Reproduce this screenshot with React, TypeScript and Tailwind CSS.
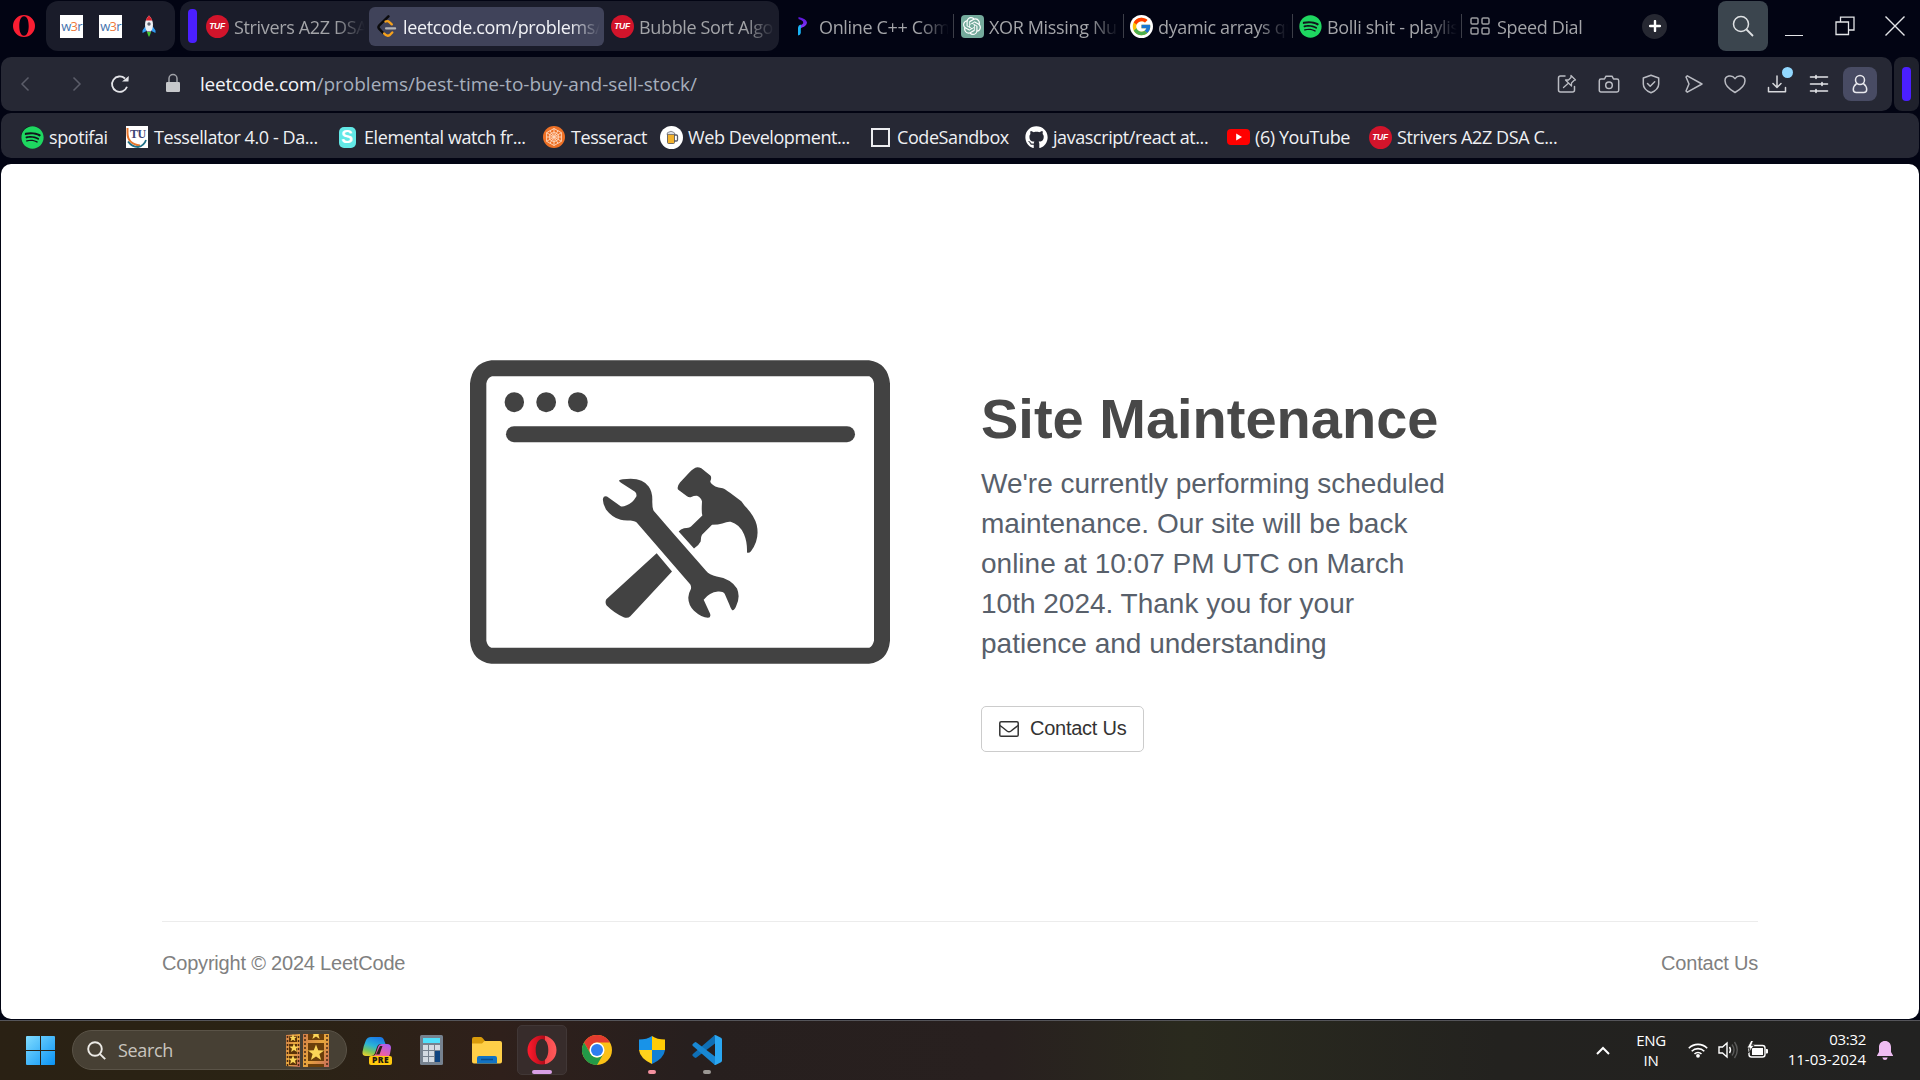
import React from "react";
import { FaSpotify, FaGithub } from "react-icons/fa";
import { FcGoogle } from "react-icons/fc";
import { SiOpenai } from "react-icons/si";

const UI = "font-['Open_Sans','Noto_Sans',sans-serif]";

function TufIcon() {
  return (
    <div className="flex h-[23px] w-[23px] items-center justify-center rounded-full bg-[#d2142b]">
      <span className="font-['Liberation_Sans',sans-serif] text-[8.5px] leading-none font-bold tracking-[-0.3px] text-white italic">TUF</span>
    </div>
  );
}

function SpotifyIcon() {
  return (
    <div className="flex h-[22px] w-[22px] items-center justify-center rounded-full bg-[#11151c]">
      <FaSpotify className="h-[23px] w-[23px] shrink-0 text-[#1ed760]" />
    </div>
  );
}

function W3rIcon() {
  return (
    <div className="flex h-[23px] w-[23px] items-center justify-center bg-white font-['Open_Sans',sans-serif] text-[13px] leading-none tracking-[-0.7px] text-[#4573ae]">
      w<span className="text-[#ee7b3d]">3</span>r
    </div>
  );
}

function RocketIcon() {
  return (
    <svg viewBox="0 0 16 22" className="h-[22px] w-[16px]">
      <path d="M4.500 11 1.500 15.500v2.500l4-2zM11.500 11l3 4.500v2.500l-4-2z" fill="#2f9df4" />
      <path d="M8 .500c2.500 2.500 4 5.500 4 9 0 3-.8 5-2 7H6c-1.200-2-2-4-2-7 0-3.500 1.500-6.500 4-9z" fill="#eef1f4" />
      <path d="M8 .500c1.600 1.600 2.700 3.200 3.300 5H4.700C5.300 3.700 6.400 2.100 8 .500z" fill="#d8232f" />
      <circle cx="8" cy="9" r="1.700" fill="#5b6472" />
      <path d="M6 17h4l-1 3-1 2-1-2z" fill="#43c934" />
    </svg>
  );
}

function LeetIcon() {
  return (
    <svg viewBox="0 0 24 24" className="h-[23px] w-[23px]" fill="none" strokeLinecap="round" strokeLinejoin="round">
      <path d="M14 1.500 4.200 11.200q-1.200 1.500 0 3l4.300 4.600" stroke="#0b0b0d" strokeWidth="2.600" />
      <path d="m11 6.800q2.300-1.200 4 .6l2.500 2.400M9.500 19.300q3 3.700 6 1.600l2.500-2.700" stroke="#f5a11c" strokeWidth="2.400" />
      <path d="M11.500 14H21" stroke="#b3b3b5" strokeWidth="2.200" />
    </svg>
  );
}

function ProgramizIcon() {
  return (
    <svg viewBox="0 0 12 20" className="h-[20px] w-[12px]">
      <defs>
        <linearGradient id="pz" x1="0" y1="0" x2="0" y2="1">
          <stop offset="0" stopColor="#5a12d8" />
          <stop offset="1" stopColor="#8a3dff" />
        </linearGradient>
      </defs>
      <path d="M2.500 1Q10.500 2.500 11 6.500q-.5 3.500-5 5L3.500 13V9.500L6 8.500Q8 7.500 7 5.500 5.500 3.500 2.500 3z" fill="url(#pz)" />
      <path d="M2 11.500q0-2 2.800-3v8.500q-.3 2-2.800 2.500z" fill="#19b4f5" />
    </svg>
  );
}

function ChatIcon() {
  return (
    <div className="flex h-[23px] w-[23px] items-center justify-center rounded-[4px] bg-[#74aa9c]">
      <SiOpenai className="h-[18px] w-[18px] text-white" />
    </div>
  );
}

function GoogleIcon() {
  return (
    <div className="flex h-[23px] w-[23px] items-center justify-center rounded-full bg-white">
      <FcGoogle className="h-[21px] w-[21px]" />
    </div>
  );
}

function GridIcon() {
  return (
    <svg viewBox="0 0 20 18" className="h-[18px] w-[20px]" fill="none" stroke="#9a9b9f" strokeWidth="1.500">
      <rect x="1" y="1" width="7" height="6" rx="1.200" />
      <rect x="12" y="1" width="7" height="6" rx="1.200" />
      <rect x="1" y="11" width="7" height="6" rx="1.200" />
      <rect x="12" y="11" width="7" height="6" rx="1.200" />
    </svg>
  );
}

function Tab({ box, icon, text, active }: { box: string; icon: React.ReactNode; text: string; active?: boolean }) {
  return (
    <div className={`flex shrink-0 items-center gap-[5px] pr-[4px] ${box}`}>
      <div className="flex w-6 shrink-0 items-center justify-center">{icon}</div>
      <div
        className={`min-w-0 flex-1 overflow-hidden pt-[2px] text-[18px] leading-[26px] tracking-[-0.35px] whitespace-nowrap [mask-image:linear-gradient(to_right,black_calc(100%-30px),transparent)] ${active ? "text-[#f1f2f6]" : "text-[#a3a4a8]"}`}
      >
        {text}
      </div>
    </div>
  );
}

function Sep() {
  return <div className="-mr-px h-6 w-px shrink-0 bg-[#3c3e48]" />;
}

function OperaMark() {
  return (
    <svg viewBox="0 0 22 22" className="h-[22px] w-[22px]">
      <path fillRule="evenodd" fill="#fa1e32" d="M11 0a11 11 0 1 0 0 22 11 11 0 0 0 0-22zM11 1.300c3.200 0 4.700 4.300 4.700 9.700s-1.500 9.700-4.700 9.700S6.300 16.400 6.300 11 7.800 1.300 11 1.300z" />
    </svg>
  );
}

function TabBar() {
  return (
    <div className="flex h-[57px] shrink-0 items-start pt-px">
      <div className="flex h-[50px] w-[46px] shrink-0 items-center justify-center pl-[2px]">
        <OperaMark />
      </div>
      <div className="flex h-[50px] w-[129px] shrink-0 items-center rounded-[12px] bg-[#1a1c2a] pl-[14px]">
        <W3rIcon />
        <div className="w-4" />
        <W3rIcon />
        <div className="w-[19px]" />
        <RocketIcon />
      </div>
      <div className="ml-[5px] flex h-[50px] w-[599px] shrink-0 items-center rounded-[12px] bg-[#1a1c2a]">
        <div className="ml-2 h-[34px] w-[9px] shrink-0 rounded-[4px] bg-[#4b1fff]" />
        <Tab box="w-[172px] pl-[8px]" icon={<TufIcon />} text="Strivers A2Z DSA" />
        <Tab box="h-[39px] w-[235px] rounded-[6px] bg-[#40435a] pl-[5px]" icon={<LeetIcon />} text="leetcode.com/problems/" active />
        <Tab box="w-[175px] pl-[6px]" icon={<TufIcon />} text="Bubble Sort Algo" />
      </div>
      <div className="flex h-[50px] shrink-0 items-center">
        <Tab box="w-[174px] pl-[11px]" icon={<ProgramizIcon />} text="Online C++ Com" />
        <Sep />
        <Tab box="w-[170px] pl-[7px]" icon={<ChatIcon />} text="XOR Missing Nu" />
        <Sep />
        <Tab box="w-[169px] pl-[6px]" icon={<GoogleIcon />} text="dyamic arrays qu" />
        <Sep />
        <Tab box="w-[169px] pl-[6px]" icon={<SpotifyIcon />} text="Bolli shit - playlis" />
        <Sep />
        <Tab box="w-[181px] pl-[7px]" icon={<GridIcon />} text="Speed Dial" />
        <div className="flex h-[25px] w-[25px] items-center justify-center rounded-full bg-[#262832]">
          <svg viewBox="0 0 12 12" className="h-3 w-3" stroke="#fff" strokeWidth="2.400" strokeLinecap="round">
            <path d="M6 1v10M1 6h10" />
          </svg>
        </div>
        <div className="ml-[51px] flex h-[50px] w-[50px] items-center justify-center rounded-[8px] bg-[#3b454e]">
          <svg viewBox="0 0 22 22" className="h-[22px] w-[22px]" fill="none" stroke="#dfe2e4" strokeWidth="1.500">
            <circle cx="9" cy="9" r="7.500" />
            <path d="m14.500 14.500 6.500 6.500" strokeWidth="1.800" />
          </svg>
        </div>
        <div className="mt-[18px] ml-[17px] h-px w-[18px] bg-[#e4e5e8]" />
        <svg viewBox="0 0 20 20" className="ml-[32px] h-5 w-5" fill="none" stroke="#e4e5e8" strokeWidth="1.300">
          <path d="M1 6h12.500v12.500H1zM5.500 6V1.200H19V14h-5.500" />
        </svg>
        <svg viewBox="0 0 20 20" className="ml-[30px] h-5 w-5" stroke="#e4e5e8" strokeWidth="1.400">
          <path d="m.5 .5 19 19M19.500.5l-19 19" />
        </svg>
      </div>
    </div>
  );
}

function ToolIcon({ box, children }: { box: string; children: React.ReactNode }) {
  return (
    <svg viewBox="0 0 22 20" className={`h-5 w-[22px] shrink-0 ${box}`} fill="none" stroke="#babcc3" strokeWidth="1.500" strokeLinecap="round" strokeLinejoin="round">
      {children}
    </svg>
  );
}

function AddressBar() {
  return (
    <div className="flex h-[54px] shrink-0 gap-[2px] pl-px">
      <div className="flex h-[54px] w-[1891px] items-center rounded-[10px] bg-[#262834]">
        <svg viewBox="0 0 10 16" className="ml-[19px] h-4 w-[10px]" fill="none" stroke="#5b5d69" strokeWidth="1.500">
          <path d="M8.500 1.500 2 8l6.500 6.500" />
        </svg>
        <svg viewBox="0 0 10 16" className="ml-[42px] h-4 w-[10px]" fill="none" stroke="#5b5d69" strokeWidth="1.500">
          <path d="M1.500 1.500 8 8l-6.500 6.500" />
        </svg>
        <svg viewBox="0 0 20 20" className="ml-[28px] h-5 w-5" fill="none" stroke="#e3e4e8" strokeWidth="1.800">
          <path d="M17 12.800A7.700 7.700 0 1 1 15 4.500" />
          <path d="M12 7.600 18.500 7.600 18.800 2z" fill="#e3e4e8" stroke="none" />
        </svg>
        <svg viewBox="0 0 16 20" className="ml-[35px] mb-[3px] h-[20px] w-[16px]">
          <path d="M4 9V5.500a4 4 0 0 1 8 0V9" fill="none" stroke="#a0a2a8" strokeWidth="1.500" />
          <rect x="1" y="9" width="14" height="10" rx="1.200" fill="#c6c8cb" />
        </svg>
        <div className="ml-[19px] flex-1 text-[19px] leading-[26px] text-[#a6afbd]">
          <span className="tracking-[-0.2px] text-[#f3f4f7]">leetcode.com</span>/problems/best-time-to-buy-and-sell-stock/
        </div>
        <ToolIcon box="mr-[20px]">
          <path d="M9 2H4.500Q2.500 2 2.500 4v12q0 2 2 2h12q2 0 2-2v-3.500" />
          <path d="m15 1.500 4.500 4.500-1.500.5-2.500 2.500v3L9.500 6h3L15 3.500zM12 9.500 7.500 13.500" strokeWidth="1.300" />
        </ToolIcon>
        <ToolIcon box="mr-[20px]">
          <path d="M3 5h3.500L8 2.200h6L15.500 5H19q1.700 0 1.700 1.700v9.600Q20.700 18 19 18H3q-1.700 0-1.700-1.700V6.700Q1.300 5 3 5z" />
          <circle cx="11" cy="11.200" r="3.300" />
        </ToolIcon>
        <ToolIcon box="mr-[21px]">
          <path d="M11 1.200 18.700 4v6q0 5.500-7.700 8.800Q3.300 15.500 3.300 10V4z" />
          <path d="m7.500 9.500 2.700 2.700 4.500-4.500" />
        </ToolIcon>
        <ToolIcon box="mr-[19px]">
          <path d="M4.300 1.800 19 10 4.300 18.200 3 17l3-7-3-7z" />
        </ToolIcon>
        <ToolIcon box="mr-[20px]">
          <path d="M11 18.500C5 15 1 11 1 6.700 1 1.500 8 .3 11 4.700 14 .3 21 1.500 21 6.700 21 11 17 15 11 18.500z" />
        </ToolIcon>
        <div className="relative mr-[20px] shrink-0">
          <ToolIcon box="block">
            <path d="M11 2v11M7 9.500l4 4 4-4M2.500 13.500v4.300h17v-4.300" stroke="#d7d8dc" />
          </ToolIcon>
          <div className="absolute top-[-7px] left-[16px] h-[11px] w-[11px] rounded-full bg-[#92d8ff]" />
        </div>
        <ToolIcon box="mr-[13px]">
          <path d="M2.500 3h17M2.500 10h17M2.500 17h17M8 1.500v3M14 8.500v3M8 15.500v3" stroke="#e3e4e8" strokeWidth="1.600" />
        </ToolIcon>
        <div className="mr-[15px] flex h-[34px] w-[34px] shrink-0 items-center justify-center rounded-[8px] bg-[#484b63]">
          <svg viewBox="0 0 16 20" className="h-5 w-4" fill="none" stroke="#e9e9ee" strokeWidth="1.500">
            <circle cx="8" cy="6" r="4.500" />
            <path d="M4.800 9.300Q1.200 12 1.300 15.500q0 3 3 3h7.400q3 0 3-3 .1-3.500-3.500-6.200" />
          </svg>
        </div>
      </div>
      <div className="flex h-[54px] w-[25px] items-center justify-center rounded-[8px] bg-[#1f212c]">
        <div className="h-[34px] w-[9px] rounded-[4px] bg-[#4b1fff]" />
      </div>
    </div>
  );
}

function Bookmark({ box, icon, text }: { box: string; icon: React.ReactNode; text: string }) {
  return (
    <div className={`flex shrink-0 items-center gap-[5px] ${box}`}>
      <div className="flex w-6 shrink-0 items-center justify-center">{icon}</div>
      <div className="text-[18px] leading-6 tracking-[-0.42px] whitespace-nowrap text-[#eff0f3]">{text}</div>
    </div>
  );
}

function TessellatorIcon() {
  return (
    <div className="relative h-[22px] w-[22px] overflow-hidden bg-white">
      <svg viewBox="0 0 22 22" className="h-[22px] w-[22px]" fill="none" strokeWidth="2">
        <path d="M1.500 2v5q0 11 12.500 12.500" stroke="#e8762c" />
        <path d="M2 15.500q4 5.500 10 5.500 6-1 8-7" stroke="#1f6f86" strokeWidth="1.800" />
      </svg>
      <span className="absolute top-[2px] left-[4px] font-['Liberation_Serif',serif] text-[12px] leading-none font-bold tracking-[-0.5px] text-[#3d4475]">TU</span>
    </div>
  );
}

function ElementalIcon() {
  return (
    <div className="flex h-[21px] w-[17px] items-center justify-center rounded-[5px] bg-[#62e8e6]">
      <span className="font-['Liberation_Sans',sans-serif] text-[18px] leading-none font-bold text-white">S</span>
    </div>
  );
}

function TesseractIcon() {
  return (
    <svg viewBox="0 0 22 22" className="h-[22px] w-[22px]" fill="none" stroke="#ffd9bf" strokeWidth=".9">
      <circle cx="11" cy="11" r="11" fill="#ee7126" stroke="none" />
      <path d="m11 2.500 7.400 4.200v8.600L11 19.500l-7.400-4.200V6.700zM11 6l4.300 2.500v5L11 16l-4.300-2.500v-5zM3.600 6.700l14.800 8.600M18.400 6.700 3.600 15.300M11 2.500v17M7 4.700l8 12.600M15 4.700 7 17.300M3.600 11h14.800" />
    </svg>
  );
}

function BeerIcon() {
  return (
    <svg viewBox="0 0 23 23" className="h-[23px] w-[23px]">
      <circle cx="11.500" cy="11.500" r="11.500" fill="#fff" />
      <path d="M14 9h2.500q1 0 1 1v4q0 1-1 1H14" fill="none" stroke="#5b5d68" strokeWidth="1.300" />
      <rect x="7.500" y="7.500" width="7" height="10" rx="1" fill="#f3b22c" stroke="#4b4d57" strokeWidth=".8" />
      <path d="M7 8.500q0-2.500 2-2.500 2-1.500 4 0 2 .5 2 2.500z" fill="#d9dce3" stroke="#4b4d57" strokeWidth=".6" />
    </svg>
  );
}

function BookmarksBar() {
  return (
    <div className="mx-px mt-[2px] flex h-[45px] shrink-0 items-center rounded-[10px] bg-[#262834] pt-[3px] pl-[19px]">
      <Bookmark box="w-[105px]" icon={<SpotifyIcon />} text="spotifai" />
      <Bookmark box="w-[210px]" icon={<TessellatorIcon />} text="Tessellator 4.0 - Da..." />
      <Bookmark box="w-[207px]" icon={<ElementalIcon />} text="Elemental watch fr..." />
      <Bookmark box="w-[117px]" icon={<TesseractIcon />} text="Tesseract" />
      <Bookmark box="w-[209px]" icon={<BeerIcon />} text="Web Development..." />
      <Bookmark box="w-[156px]" icon={<div className="h-[19px] w-[19px] border-2 border-[#ecedf0]" />} text="CodeSandbox" />
      <Bookmark box="w-[202px]" icon={<FaGithub className="h-[23px] w-[23px] text-white" />} text="javascript/react at..." />
      <Bookmark
        box="w-[142px]"
        icon={
          <svg viewBox="0 0 23 16" className="h-4 w-[23px]">
            <rect width="23" height="16" rx="4" fill="#f00" />
            <path d="m9.200 4.600 5.800 3.400-5.800 3.400z" fill="#fff" />
          </svg>
        }
        text="(6) YouTube"
      />
      <Bookmark box="" icon={<TufIcon />} text="Strivers A2Z DSA C..." />
    </div>
  );
}

function Illustration() {
  return (
    <svg viewBox="30 30 1260 911" className="h-[304px] w-[420px] shrink-0" fill="#424242">
      <path
        fillRule="evenodd"
        d="M94 30H1227Q1284 38 1290 100V872Q1284 934 1227 941H94Q36 934 30 872V100Q36 38 94 30zM96 78Q82 82 79 100V872Q82 888 94 893H1228Q1238 888 1242 872V100Q1240 84 1228 78z"
      />
      <rect x="134" y="126" width="58" height="60" rx="29" />
      <rect x="229" y="126" width="59" height="60" rx="29" />
      <rect x="324" y="126" width="59" height="60" rx="29" />
      <rect x="138" y="228" width="1047" height="48" rx="24" />
      <path d="M477 391Q482 386 512 386Q550 387 566 409Q577 424 577 448Q576 472 581 482L640 550L738 662Q748 675 770 679Q813 686 831 715Q842 741 828 769Q822 782 817 780Q813 777 808 763L794 731Q789 723 774 724Q748 726 731 749L750 790Q754 802 744 803Q725 803 702 782Q684 763 685 741Q686 729 693 716Q694 708 691 703L532 519Q528 513 512 511Q491 512 482 509Q456 502 438 478Q427 459 429 445Q431 436 441 439L482 468Q487 471 500 465Q516 461 529 439Q531 431 525 425L483 398Q477 394 477 391z" />
      <path d="M712 351Q718 351 724 354L751 376Q756 382 751 393Q750 399 766 409Q774 413 788 414Q795 416 810 428L844 453L854 467Q883 496 890 524Q900 568 873 603Q867 610 861 607Q862 575 852 552Q838 522 812 515Q804 513 787 520Q775 524 756 524L726 554Q722 560 722 574Q717 585 702 595L656 544Q662 537 672 534Q687 534 693 529L727 496Q724 487 726 454Q724 443 711 437Q704 436 692 441Q686 442 681 438L654 418Q650 409 660 397L688 367Q700 353 712 351z" />
      <path d="M590 609L636 664L511 798Q503 806 491 801Q464 790 440 766Q434 756 439 747z" />
    </svg>
  );
}

function Page() {
  return (
    <div className="mx-px mt-[6px] flex h-[855px] shrink-0 flex-col rounded-[10px] bg-white px-[161px] font-['Liberation_Sans',Arial,sans-serif]">
      <div className="flex h-[758px] shrink-0 items-start border-b border-[#ececec] pt-[196px] pl-[308px]">
        <Illustration />
        <div className="ml-[91px] pt-[24px]">
          <h1 className="text-[56px] leading-[70px] font-bold whitespace-nowrap text-[#484848]">Site Maintenance</h1>
          <p className="mt-[10px] w-[480px] text-[28px] leading-10 text-[#58606b]">
            We're currently performing scheduled
            <br />
            maintenance. Our site will be back
            <br />
            online at 10:07 PM UTC on March
            <br />
            10th 2024. Thank you for your
            <br />
            patience and understanding
          </p>
          <button className="mt-[42px] flex h-[46px] w-[163px] items-center rounded-[5px] border border-[#ccc] pl-[17px] text-[20px] text-[#333]">
            <svg viewBox="0 0 20 16" className="mr-[11px] h-4 w-5" fill="none" stroke="#333" strokeWidth="1.500">
              <rect x=".8" y=".8" width="18.400" height="14.400" rx="1.300" />
              <path d="M1 4.500q4 3 7 5.500 2 1.500 4 0 3-2.500 7-5.500" />
            </svg>
            <span className="pb-[2px] tracking-[-0.25px] whitespace-nowrap">Contact Us</span>
          </button>
        </div>
      </div>
      <div className="flex items-center justify-between pt-[26px] text-[20px] leading-[30px] tracking-[-0.2px] text-[#808080]">
        <span>Copyright © 2024 LeetCode</span>
        <span>Contact Us</span>
      </div>
    </div>
  );
}

function FilmArt() {
  const star = "M0-10 2.600-3.200 9.600-3 4 1.300 6 8.200 0 4.200-6 8.200-4 1.300-9.600-3-2.600-3.200z";
  return (
    <svg viewBox="0 0 43 33" className="h-[33px] w-[43px]">
      <defs>
        <linearGradient id="film" x1="0" y1="0" x2="1" y2="1">
          <stop offset="0" stopColor="#cf7c4a" />
          <stop offset=".5" stopColor="#e8a63c" />
          <stop offset="1" stopColor="#c66a5c" />
        </linearGradient>
      </defs>
      <path d="M0 1 14 0v33L0 32z" fill="url(#film)" />
      <path d="M3 2h8v6H3zM3 10h8v10H3zM3 22h8v9H3z" fill="#5c3208" />
      <rect x="17" width="26" height="33" fill="url(#film)" />
      <path d="M22 0h16v6H22zM22 9h16v18H22zM22 30h16v3H22z" fill="#6b3f0b" />
      <path d="M19 1v32M41 1v32M1.500 2v30M12.500 2v30" stroke="#4a2a12" strokeWidth="1.500" strokeDasharray="2 2" />
      <g fill="#fbd558">
        <path d={star} transform="translate(30 19) scale(.85)" />
        <path d={star} transform="translate(30 0) scale(.6)" />
        <path d={star} transform="translate(8 14) scale(.5)" />
        <path d={star} transform="translate(7 26) scale(.5)" />
        <path d={star} transform="translate(7 4) scale(.4)" />
      </g>
    </svg>
  );
}

function CopilotIcon() {
  return (
    <div className="relative h-[29px] w-[30px]">
      <svg viewBox="0 0 30 29" className="h-[29px] w-[30px]">
        <defs>
          <linearGradient id="cpA" x1=".6" y1="0" x2=".2" y2="1">
            <stop offset="0" stopColor="#1a7be8" />
            <stop offset=".45" stopColor="#2bb3d6" />
            <stop offset=".75" stopColor="#79c65a" />
            <stop offset="1" stopColor="#e8cf2e" />
          </linearGradient>
          <linearGradient id="cpB" x1=".8" y1="0" x2=".3" y2="1">
            <stop offset="0" stopColor="#a95cf0" />
            <stop offset=".6" stopColor="#ee5fa0" />
            <stop offset="1" stopColor="#ff9a5c" />
          </linearGradient>
        </defs>
        <path d="M9 1h9q3 0 4 3l1.500 4H19q-3 0-4 3l-2 6q-1 3-4 3H4q-4 0-3.500-4 .8-6 3.500-12 1.500-3 5-3z" fill="url(#cpA)" />
        <path d="M20 8h5q4 0 4 4-.5 6-3 11-1 2-4 2h-8q-3 0-4-3l-.5-2q4 0 4.500-3l2-6q1-3 4-3z" fill="url(#cpB)" />
        <path d="M18 10h2.500l-3 8.500H14z" fill="#2a1f16" />
      </svg>
      <span className="absolute right-0 bottom-0 flex h-[9px] w-[23px] items-center justify-center rounded-[2px] bg-[#ffc90e] font-['Open_Sans',sans-serif] text-[8.5px] leading-none font-extrabold tracking-[0.4px] text-[#1d1a10]">
        PRE
      </span>
    </div>
  );
}

function TaskItem({ box, mark, children }: { box: string; mark?: string; children: React.ReactNode }) {
  return (
    <div className={`relative flex h-[50px] shrink-0 items-center justify-center ${box}`}>
      {children}
      {mark && <div className={`absolute bottom-[1px] left-1/2 h-[4px] -translate-x-1/2 rounded-full ${mark}`} />}
    </div>
  );
}

function Taskbar() {
  return (
    <div className="mt-px flex h-[60px] shrink-0 items-center border-t border-[#55555a] bg-[linear-gradient(to_right,#2a2114_0%,#2a2314_14%,#2f201b_26%,#271f1e_36%,#28201f_52%,#2a2a1e_62%,#23221f_78%,#222221_100%)] pb-px">
      <svg viewBox="0 0 29 29" className="ml-[26px] h-[29px] w-[29px] shrink-0">
        <defs>
          <linearGradient id="win" x1="0" y1="0" x2="1" y2="1">
            <stop offset="0" stopColor="#80dcff" />
            <stop offset="1" stopColor="#0a93f5" />
          </linearGradient>
        </defs>
        <path d="M0 1q0-1 1-1h13v14H0zM15 0h13q1 0 1 1v13H15zM0 15h14v14H1q-1 0-1-1zM15 15h14v13q0 1-1 1H15z" fill="url(#win)" />
      </svg>
      <div className="ml-[17px] flex h-[40px] w-[275px] shrink-0 items-center rounded-full border border-[#5a5347] bg-[#474034] pl-[14px]">
        <svg viewBox="0 0 19 19" className="h-[19px] w-[19px]" fill="none" stroke="#eceae6" strokeWidth="1.900">
          <circle cx="8" cy="8" r="6.800" />
          <path d="m12.800 12.800 5.400 5.400" />
        </svg>
        <span className="ml-[12px] w-[168px] text-[18px] leading-6 tracking-[-0.35px] text-[#c9c5bf]">Search</span>
        <FilmArt />
      </div>
      <TaskItem box="ml-[5px] w-[50px]">
        <CopilotIcon />
      </TaskItem>
      <TaskItem box="ml-[5px] w-[50px] pr-px">
        <svg viewBox="0 0 23 30" className="h-[30px] w-[23px]">
          <rect width="23" height="30" rx="1.500" fill="#76828f" />
          <rect x="3" y="3" width="17" height="5" fill="#50e0fc" />
          <path d="M3 10h5v5H3zM9 10h5v5H9zM15 10h5v5h-5zM3 16h5v5H3zM9 16h5v5H9zM3 22h5v5H3zM9 22h5v5H9z" fill="#d3dbe3" />
          <path d="M15 16h5v11h-5z" fill="#0e4480" />
        </svg>
      </TaskItem>
      <TaskItem box="ml-[5px] w-[50px]">
        <svg viewBox="0 0 30 27" className="h-[27px] w-[30px]">
          <path d="M0 2q0-2 2-2h7q1 0 2 1.500L13 4v4H0z" fill="#d99b0b" />
          <path d="M0 6.500h10L12.500 4H28q2 0 2 2v18.500q0 2-2 2H2q-2 0-2-2z" fill="#ffcf48" />
          <path d="M5 26.500V21q0-2 2-2h16q2 0 2 2v5.500z" fill="#1273c4" />
          <path d="M9 22.500h12" stroke="#0a4d8d" strokeWidth="1.500" />
        </svg>
      </TaskItem>
      <TaskItem box="ml-[5px] w-[50px] rounded-[5px] border border-[#413736] bg-[#372c2b]" mark="w-5 bg-[#d9a0e6] -mb-px">
        <svg viewBox="0 0 30 30" className="h-[30px] w-[30px]">
          <defs>
            <linearGradient id="op" x1="0" y1="0" x2="1" y2="0">
              <stop offset="0" stopColor="#ff1b2d" />
              <stop offset=".6" stopColor="#b00b19" />
              <stop offset=".62" stopColor="#f5484c" />
              <stop offset="1" stopColor="#ff5a5a" />
            </linearGradient>
          </defs>
          <path fillRule="evenodd" fill="url(#op)" d="M15 .500a14.500 14.500 0 1 0 0 29 14.500 14.500 0 0 0 0-29zM15 4c4 0 6.300 5 6.300 11S19 26 15 26 8.700 21 8.700 15 11 4 15 4z" />
        </svg>
      </TaskItem>
      <TaskItem box="ml-[5px] w-[50px]">
        <svg viewBox="0 0 30 30" className="h-[30px] w-[30px]">
          <circle cx="15" cy="15" r="15" fill="#fbc116" />
          <path d="M2 7.500A15 15 0 0 1 28 7.500H15A7.500 7.500 0 0 0 8.500 18.700z" fill="#e33b2e" />
          <path d="M2 7.500 8.500 18.700A7.500 7.500 0 0 0 21.500 18.700L15 30A15 15 0 0 1 2 7.500z" fill="#239a48" />
          <circle cx="15" cy="15" r="7.500" fill="#fff" />
          <circle cx="15" cy="15" r="6" fill="#2e7ef0" />
        </svg>
      </TaskItem>
      <TaskItem box="ml-[5px] w-[50px]" mark="w-2 bg-[#f4919f]">
        <svg viewBox="0 0 26 28" className="h-[28px] w-[26px]">
          <path d="M13 0Q8 3.500 0 3.500V14h13z" fill="#1893e8" />
          <path d="M13 0q5 3.500 13 3.500V14H13z" fill="#ffcb05" />
          <path d="M0 14q1 8.500 13 14V14z" fill="#ffd21c" />
          <path d="M26 14q-1 8.500-13 14V14z" fill="#1280d4" />
        </svg>
      </TaskItem>
      <TaskItem box="ml-[5px] w-[50px]" mark="w-2 bg-[#9b9894]">
        <svg viewBox="0 0 30 30" className="h-[30px] w-[30px]">
          <path d="M.6 19.200Q0 20.200.8 21l1.800 1.600q.9.700 1.900 0L23 8.500V.6q-1 .1-1.600.7z" fill="#0f6fb5" />
          <path d="M.6 10.800Q0 9.800.8 9l1.800-1.600q.9-.7 1.900 0L23 21.500v7.900q-1-.1-1.600-.7z" fill="#1887d3" />
          <path d="M22 .3q1-.5 2 0l5 2.400q1 .5 1 1.700v21.200q0 1.200-1 1.700l-5 2.400q-1 .5-2 0 1-.3 1-1.500V1.800Q23 .600 22 .3z" fill="#2aa7f2" />
        </svg>
      </TaskItem>
      <div className="flex-1" />
      <svg viewBox="0 0 14 9" className="h-[9px] w-[14px]" fill="none" stroke="#fff" strokeWidth="2">
        <path d="m1 8 6-6 6 6" />
      </svg>
      <div className="mb-px ml-[21px] w-[40px] text-center text-[15px] leading-5 tracking-[-0.3px] text-white">
        <div>ENG</div>
        <div>IN</div>
      </div>
      <svg viewBox="0 0 20 16" className="ml-[17px] h-4 w-5" fill="none" stroke="#fff" strokeWidth="1.600">
        <path d="M.8 6.200a13 13 0 0 1 18.400 0M3.700 9.200a9 9 0 0 1 12.600 0M6.500 12a5 5 0 0 1 7 0" />
        <circle cx="10" cy="13.800" r="1.900" fill="#fff" stroke="none" />
      </svg>
      <svg viewBox="0 0 20 18" className="ml-[10px] h-[18px] w-5" fill="none" stroke="#fff" strokeWidth="1.400">
        <path d="M1 6h3.500L9 2v14l-4.500-4H1z" />
        <path d="M11.500 6q2 3 0 6" />
        <path d="M14 3.500q4 5.500 0 11M16.500 1q5.500 8 0 16" stroke="#5a5a59" />
      </svg>
      <svg viewBox="0 0 21 17" className="mb-[2px] ml-[9px] h-[17px] w-[21px]">
        <rect x="2" y="4.500" width="16" height="11.500" rx="2.500" fill="none" stroke="#fff" strokeWidth="1.400" />
        <path d="M5 7h11v7H5z" fill="#fff" />
        <path d="M19 8h1q1 0 1 1v2.500q0 1-1 1h-1z" fill="#fff" />
        <path d="M4-.5 0 7h3L1.500 12 7 4.500H4.500L6.500-.5z" fill="#fff" stroke="#232321" strokeWidth=".8" />
      </svg>
      <div className="mb-[2px] w-[98px] text-right text-[15px] leading-5 whitespace-nowrap text-white">
        <div className="tracking-[-0.3px]">03:32</div>
        <div>11-03-2024</div>
      </div>
      <svg viewBox="0 0 16 19" className="mr-[27px] ml-[11px] h-[19px] w-4" fill="#eebcf2">
        <path d="M8 0c3.600 0 6 2.600 6 6v5l2 3.500V15H0v-.5L2 11V6c0-3.400 2.400-6 6-6zM5.300 16.500h5.400Q10 19 8 19t-2.700-2.500z" />
      </svg>
    </div>
  );
}

export default function App() {
  return (
    <div className={`flex h-[1080px] w-[1920px] flex-col overflow-hidden bg-[#020413] ${UI}`}>
      <TabBar />
      <AddressBar />
      <BookmarksBar />
      <Page />
      <Taskbar />
    </div>
  );
}
